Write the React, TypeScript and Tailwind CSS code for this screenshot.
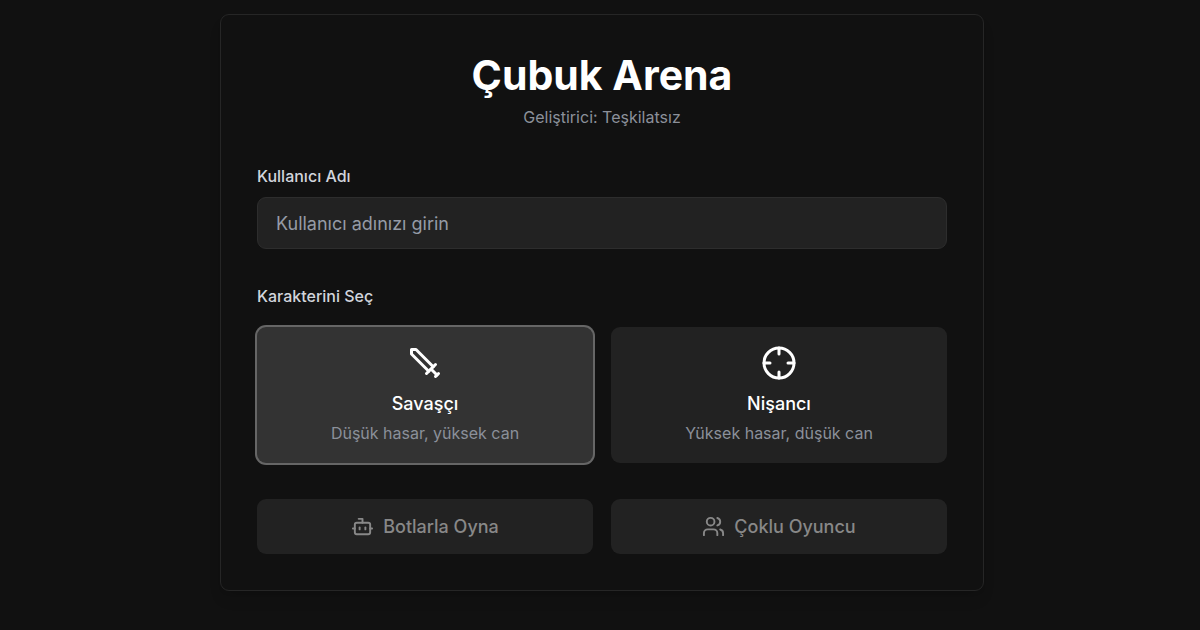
import { useState } from 'react';
import { Bot, Crosshair, Users } from 'lucide-react';

type CharacterId = 'warrior' | 'marksman';

interface Character {
  id: CharacterId;
  name: string;
  description: string;
  icon: React.ComponentType<{ className?: string }>;
}

// Blade points to the upper left
function SwordIcon({ className }: { className?: string }) {
  return (
    <svg
      className={className}
      viewBox="0 0 24 24"
      fill="none"
      stroke="currentColor"
      strokeWidth="2"
      strokeLinecap="round"
      strokeLinejoin="round"
      aria-hidden="true"
    >
      <polyline points="14.5 17.5 3 6 3 3 6 3 17.5 14.5" />
      <line x1="13" x2="19" y1="19" y2="13" />
      <line x1="16" x2="20" y1="16" y2="20" />
      <line x1="19" x2="21" y1="21" y2="19" />
    </svg>
  );
}

const CHARACTERS: Character[] = [
  { id: 'warrior', name: 'Savaşçı', description: 'Düşük hasar, yüksek can', icon: SwordIcon },
  { id: 'marksman', name: 'Nişancı', description: 'Yüksek hasar, düşük can', icon: Crosshair },
];

const MODES = [
  { id: 'bots', label: 'Botlarla Oyna', icon: Bot },
  { id: 'multiplayer', label: 'Çoklu Oyuncu', icon: Users },
];

export default function App() {
  const [username, setUsername] = useState('');
  const [selected, setSelected] = useState<CharacterId>('warrior');

  // A name is required before a match can start
  const canPlay = username.trim().length > 0;

  return (
    <main className="min-h-screen bg-[#111111] pt-3.5 pr-4 pb-8 pl-5 font-['Inter',sans-serif] text-white">
      <div className="mx-auto max-w-[764px] rounded-[9px] border border-[#262626] bg-[#111111] p-9 shadow-lg">
        {/* Header */}
        <header className="mb-9 text-center">
          <h1 className="text-[41px] leading-12 font-bold">Çubuk Arena</h1>
          <p className="mt-1.5 text-base leading-6 text-[#8b909a]">Geliştirici: Teşkilatsız</p>
        </header>

        {/* Username */}
        <div className="mb-9">
          <label htmlFor="username" className="mb-2.5 block text-base leading-[22px] font-medium text-gray-300">
            Kullanıcı Adı
          </label>
          <input
            id="username"
            type="text"
            value={username}
            onChange={e => setUsername(e.target.value)}
            placeholder="Kullanıcı adınızı girin"
            className="block h-[52px] w-full rounded-[9px] border border-[#2d2d2d] bg-[#222222] px-[18px] text-lg text-white outline-none placeholder:text-[#959ba6] focus:border-[#666666]"
          />
        </div>

        {/* Character picker */}
        <section className="mb-9" aria-labelledby="character-title">
          <h2 id="character-title" className="mb-5 text-base leading-[22px] font-medium text-gray-300">
            Karakterini Seç
          </h2>
          <div className="grid grid-cols-2 gap-[18px]">
            {CHARACTERS.map(({ id, name, description, icon: Icon }) => (
              <button
                key={id}
                type="button"
                aria-pressed={selected === id}
                onClick={() => setSelected(id)}
                className={`flex flex-col items-center rounded-[9px] p-[18px] ${selected === id ? 'bg-[#333333] ring-2 ring-[#666666]' : 'bg-[#222222] hover:bg-[#2a2a2a]'}`}
              >
                <Icon className="mb-[9px] size-9" />
                <span className="text-lg leading-7 font-medium">{name}</span>
                <span className="mt-[3px] text-base leading-6 text-[#8b909a]">{description}</span>
              </button>
            ))}
          </div>
        </section>

        {/* Game modes */}
        <div className="grid grid-cols-2 gap-[18px]">
          {MODES.map(({ id, label, icon: Icon }) => (
            <button
              key={id}
              type="button"
              disabled={!canPlay}
              className="flex h-[55px] items-center justify-center gap-[9px] rounded-[9px] bg-[#222222] text-lg font-medium text-white hover:bg-[#333333] disabled:cursor-not-allowed disabled:bg-[#222222] disabled:text-[#888888]"
            >
              <Icon className="size-[23px]" />
              {label}
            </button>
          ))}
        </div>
      </div>
    </main>
  );
}
